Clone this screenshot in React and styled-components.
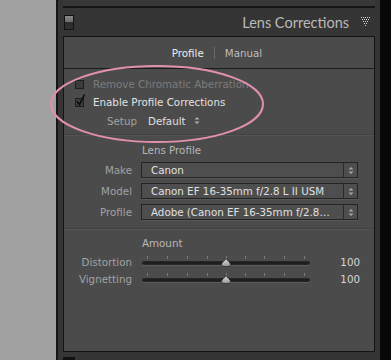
import React from "react"
import styled, { createGlobalStyle } from "styled-components"

const GlobalStyle = createGlobalStyle`
    html, body {
        margin: 0;
        padding: 0;
        background: #0a0a0a;
    }
`

const uiFont = `"DejaVu Sans", "Liberation Sans", sans-serif`

const Page = styled.div`
    position: relative;
    display: flex;
    width: 391px;
    height: 360px;
    overflow: hidden;
    font-family: ${uiFont};
    font-size: 10.3px;
    line-height: 12px;
`

const LeftStrip = styled.div`
    width: 56px;
    background: #a1a1a1;
`

const Edge = styled.div`
    width: 2px;
    background: #161616;
`

const Column = styled.div`
    flex: 1;
    display: flex;
    flex-direction: column;
    padding: 0 5px;
    background: #353535;
`

const RightStrip = styled.div`
    width: 11px;
    background: #080808;
`

const TopBar = styled.div`
    height: 6px;
    border-bottom: 2px solid #151515;
    background: #383838;
`

const Header = styled.div`
    display: flex;
    align-items: center;
    height: 28px;
    padding: 0 4px 0 1px;
`

const Toggle = styled.div`
    width: 8px;
    height: 13px;
    border: 1px solid #111;
    background: linear-gradient(#8a8a8a, #6a6a6a 50%, #2c2c2c 50%, #333);
    margin-top: 1px;
`

const Title = styled.div`
    flex: 1;
    text-align: right;
    padding-right: 12px;
    font-family: Lato, "Liberation Sans", sans-serif;
    font-size: 14.5px;
    line-height: 18px;
    color: #bababa;
    margin-top: 2px;
`

const Panel = styled.div`
    height: 314px;
    border: 1px solid #141414;
    background: #4b4b4b;
    display: flex;
    flex-direction: column;
`

const Tabs = styled.div`
    display: flex;
    justify-content: center;
    align-items: center;
    gap: 10px;
    height: 31px;
    border-bottom: 1px solid #1c1c1c;
    padding-right: 4px;
`

const Tab = styled.span`
    color: ${p => (p.$active ? "#ececec" : "#bdbdbd")};
`

const TabSep = styled.span`
    width: 1px;
    height: 12px;
    background: #6a6a6a;
`

const Body = styled.div`
    display: flex;
    flex-direction: column;
    padding-top: 6px;
`

const CheckRow = styled.label`
    display: flex;
    align-items: center;
    height: 18px;
    padding-left: 11px;
    color: ${p => (p.$dim ? "#7b7b7b" : "#e2e2e2")};
`

const Box = styled.span`
    position: relative;
    width: 7px;
    height: 7px;
    border: 1px solid #1e1e1e;
    background: #3b3b3b;
    margin-right: 9px;

    svg {
        position: absolute;
        left: 0;
        top: -5px;
    }
`

const SetupRow = styled.div`
    display: flex;
    align-items: center;
    height: 19px;
    padding-left: 43px;
`

const Label = styled.span`
    color: #a2a2a2;
`

const Value = styled.span`
    color: #e0e0e0;
    margin-left: 11px;
    display: flex;
    align-items: center;
    gap: 8px;
`

const Divider = styled.div`
    height: 1px;
    background: #424242;
    border-bottom: 1px solid #545454;
    margin: ${p => p.$m};
`

const SectionTitle = styled.div`
    padding-left: 78px;
    color: #b8b8b8;
    height: 16px;
    line-height: 16px;
`

const FieldGrid = styled.div`
    display: grid;
    grid-template-columns: 68px 1fr;
    column-gap: 9px;
    row-gap: 5px;
    padding-right: 16px;
    align-items: center;
    margin-top: 4px;
`

const FieldLabel = styled.span`
    text-align: right;
    color: #a2a2a2;
`

const Select = styled.div`
    display: flex;
    align-items: center;
    height: 14px;
    border: 1px solid #242424;
    background: #4e4e4e;
    box-shadow: 0 1px 0 #575757;
    color: #e0e0e0;
`

const SelectText = styled.span`
    flex: 1;
    padding-left: 9px;
    white-space: nowrap;
    overflow: hidden;
`

const SelectArrow = styled.span`
    width: 13px;
    height: 100%;
    border-left: 1px solid #2a2a2a;
    display: flex;
    align-items: center;
    justify-content: center;
`

const SliderGrid = styled.div`
    display: grid;
    grid-template-columns: 68px 168px 1fr;
    column-gap: 10px;
    row-gap: 3px;
    padding-right: 14px;
    align-items: center;
    margin-top: 4px;
`

const Track = styled.div`
    position: relative;
    height: 14px;

    &::before {
        content: "";
        position: absolute;
        left: 0;
        right: 0;
        top: 6px;
        height: 2px;
        border-radius: 2px;
        background: #1e1e1e;
        border: 1px solid #262626;
        box-shadow: 0 1px 0 #5c5c5c;
    }
`

const Tick = styled.span`
    position: absolute;
    top: 1px;
    width: 1px;
    height: 3px;
    background: #7a7a7a;
`

const Thumb = styled.svg`
    position: absolute;
    top: 3px;
`

const Amount = styled.span`
    text-align: right;
    color: #d6d6d6;
`

const Footer = styled.div`
    flex: 1;
    display: flex;
    align-items: flex-end;
`

const FooterMark = styled.div`
    width: 12px;
    height: 3px;
    background: #111;
`

const Annotation = styled.svg`
    position: absolute;
    left: 0;
    top: 0;
    pointer-events: none;
`

const UpDown = ({ color = "#b0b0b0" }) => (
    <svg width="6" height="9" viewBox="0 0 6 9">
        <path d="M0.5 3.5 L3 1 L5.5 3.5 Z M0.5 5.5 L3 8 L5.5 5.5 Z" fill={color} />
    </svg>
)

const DotTriangle = () => {
    const dots = []
    for (let r = 0; r < 5; r++) {
        for (let c = 0; c < 5 - r; c++) {
            dots.push(<rect key={`${r}-${c}`} x={c * 2 + r} y={r * 2} width="1" height="1" fill="#d0d0d0" />)
        }
    }
    return (
        <svg width="10" height="10" viewBox="0 0 10 10">
            {dots}
        </svg>
    )
}

const Slider = ({ pos }) => {
    const ticks = [5, 25, 45, 65, 84, 103, 122, 142, 162]
    return (
        <Track>
            {ticks.map(t => (
                <Tick key={t} style={{ left: t }} />
            ))}
            <Thumb width="10" height="9" viewBox="0 0 10 9" style={{ left: pos - 5 }}>
                <defs>
                    <linearGradient id="thumbFill" x1="0" y1="0" x2="0" y2="1">
                        <stop offset="0" stopColor="#dedede" />
                        <stop offset="1" stopColor="#959595" />
                    </linearGradient>
                </defs>
                <path d="M5 0.5 C6 2.5 9.5 4.5 9.5 6.5 C9.5 8 8 8.5 5 8.5 C2 8.5 0.5 8 0.5 6.5 C0.5 4.5 4 2.5 5 0.5 Z" fill="url(#thumbFill)" stroke="#2a2a2a" strokeWidth="0.8" />
            </Thumb>
        </Track>
    )
}

const lensFields = [
    ["Make", "Canon"],
    ["Model", "Canon EF 16-35mm f/2.8 L II USM"],
    ["Profile", "Adobe (Canon EF 16-35mm f/2.8…"],
]

export default function App() {
    return (
        <>
            <GlobalStyle />
            <Page>
                <LeftStrip />
                <Edge />
                <Column>
                    <TopBar />
                    <Header>
                        <Toggle />
                        <Title>Lens Corrections</Title>
                        <DotTriangle />
                    </Header>
                    <Panel>
                        <Tabs>
                            <Tab $active>Profile</Tab>
                            <TabSep />
                            <Tab>Manual</Tab>
                        </Tabs>
                        <Body>
                            <CheckRow $dim>
                                <Box />
                                Remove Chromatic Aberration
                            </CheckRow>
                            <CheckRow>
                                <Box>
                                    <svg width="10" height="12" viewBox="0 0 10 12">
                                        <path d="M1 7.5 L3.5 10.5 L8.5 0.5" fill="none" stroke="#0d0d0d" strokeWidth="1.6" />
                                    </svg>
                                </Box>
                                Enable Profile Corrections
                            </CheckRow>
                            <SetupRow>
                                <Label>Setup</Label>
                                <Value>
                                    Default
                                    <UpDown />
                                </Value>
                            </SetupRow>
                            <Divider $m="4px 0 6px" />
                            <SectionTitle>Lens Profile</SectionTitle>
                            <FieldGrid>
                                {lensFields.map(([label, value]) => (
                                    <React.Fragment key={label}>
                                        <FieldLabel>{label}</FieldLabel>
                                        <Select>
                                            <SelectText>{value}</SelectText>
                                            <SelectArrow>
                                                <UpDown color="#a8a8a8" />
                                            </SelectArrow>
                                        </Select>
                                    </React.Fragment>
                                ))}
                            </FieldGrid>
                            <Divider $m="8px 0 5px" />
                            <SectionTitle>Amount</SectionTitle>
                            <SliderGrid>
                                <FieldLabel>Distortion</FieldLabel>
                                <Slider pos={84} />
                                <Amount>100</Amount>
                                <FieldLabel>Vignetting</FieldLabel>
                                <Slider pos={84} />
                                <Amount>100</Amount>
                            </SliderGrid>
                        </Body>
                    </Panel>
                    <Footer>
                        <FooterMark />
                    </Footer>
                </Column>
                <RightStrip />
                <Annotation width="391" height="360">
                    <ellipse cx="157" cy="104" rx="106" ry="38" fill="none" stroke="#e291ad" strokeWidth="2" />
                </Annotation>
            </Page>
        </>
    )
}
